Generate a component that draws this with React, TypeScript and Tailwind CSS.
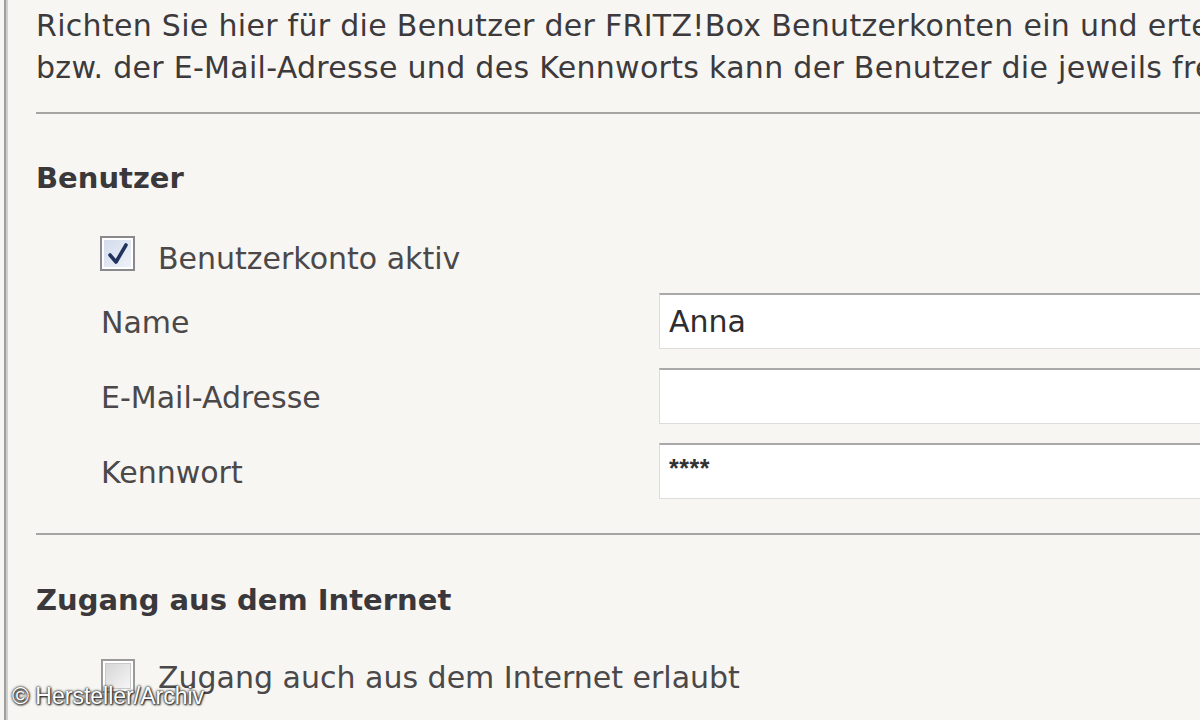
import React from "react";

function CheckedBox() {
  return (
    <div className="w-[35px] h-[35px] shrink-0 border-2 border-[#8a8a8e] bg-white p-[2px]">
      <div className="w-full h-full bg-gradient-to-br from-[#d3dced] to-[#eef2f9] flex items-center justify-center">
        <svg width="24" height="24" viewBox="0 0 24 24">
          <path d="M4 13 L10 20 L20 3" fill="none" stroke="#22345e" strokeWidth="3.6" strokeLinecap="round" strokeLinejoin="round" />
        </svg>
      </div>
    </div>
  );
}

function EmptyBox() {
  return (
    <div className="w-[34px] h-[34px] shrink-0 border-2 border-[#9a9a9a] bg-white p-[2px]">
      <div className="w-full h-full border border-[#c9c9c9] bg-gradient-to-br from-[#d6d6d6] to-[#f6f6f6]" />
    </div>
  );
}

function Field({ label, value, small }: { label: string; value?: string; small?: boolean }) {
  return (
    <div className="flex items-center">
      <div className="w-[558px] shrink-0 mt-[3px] text-[30px] leading-[42px] text-[#4a4849]">{label}</div>
      <div className="flex-1 -mr-[20px] h-[56px] bg-white border border-[#dcdcda] border-t-2 border-t-[#a9a9a9] flex items-center pl-[9px]">
        {value ? (
          small ? (
            <span className="text-[25px] leading-none text-[#333] font-['Liberation_Sans',sans-serif] font-bold -mt-[6px] tracking-[0.5px]">{value}</span>
          ) : (
            <span className="text-[30px] leading-[42px] text-[#2e2d2e] mt-[1px]">{value}</span>
          )
        ) : null}
      </div>
    </div>
  );
}

export default function App() {
  return (
    <div className="relative w-[1200px] h-[720px] overflow-hidden bg-[#f8f6f2] flex font-['DejaVu_Sans',sans-serif] text-[#3c3a3c]">
      <div className="ml-[4px] w-[4px] h-full border-l-2 border-l-[#9e9e9e] border-r-2 border-r-[#cfcfcc] shrink-0" />
      <div className="flex-1 pl-[28px] min-w-0">
        <p className="pt-[5px] text-[30px] leading-[42px] whitespace-nowrap tracking-[0.3px]">
          Richten Sie hier für die Benutzer der FRITZ!Box Benutzerkonten ein und erteilen
          <br />
          bzw. der E-Mail-Adresse und des Kennworts kann der Benutzer die jeweils freigegebenen
        </p>
        <div className="mt-[23px] h-[2px] bg-[#a5a5a3]" />
        <h2 className="mt-[43px] text-[29px] leading-[42px] font-bold text-[#3a383a]">Benutzer</h2>

        <div className="mt-[37px] ml-[64px] flex items-start gap-[23px]">
          <CheckedBox />
          <span className="mt-[2px] text-[30px] leading-[42px] text-[#4a4849] whitespace-nowrap">Benutzerkonto aktiv</span>
        </div>

        <div className="mt-[13px] ml-[65px] flex flex-col gap-[19px]">
          <Field label="Name" value="Anna" />
          <Field label="E-Mail-Adresse" />
          <Field label="Kennwort" value="****" small />
        </div>

        <div className="mt-[34px] h-[2px] bg-[#a5a5a3]" />
        <h2 className="mt-[44px] text-[29px] leading-[42px] font-bold text-[#3a383a] whitespace-nowrap">Zugang aus dem Internet</h2>

        <div className="mt-[33px] ml-[65px] flex items-start gap-[23px]">
          <div className="mt-[5px]">
            <EmptyBox />
          </div>
          <span className="mt-[3px] text-[30px] leading-[42px] text-[#4a4849] whitespace-nowrap">Zugang auch aus dem Internet erlaubt</span>
        </div>
      </div>

      <div className="absolute left-[12px] top-[685px] text-[23px] leading-[22px] text-white font-['Liberation_Sans',sans-serif] whitespace-nowrap [text-shadow:0_0_2px_#2a2a2a,0_0_3px_#2a2a2a,1px_1px_2px_#111]">
        © Hersteller/Archiv
      </div>
    </div>
  );
}
